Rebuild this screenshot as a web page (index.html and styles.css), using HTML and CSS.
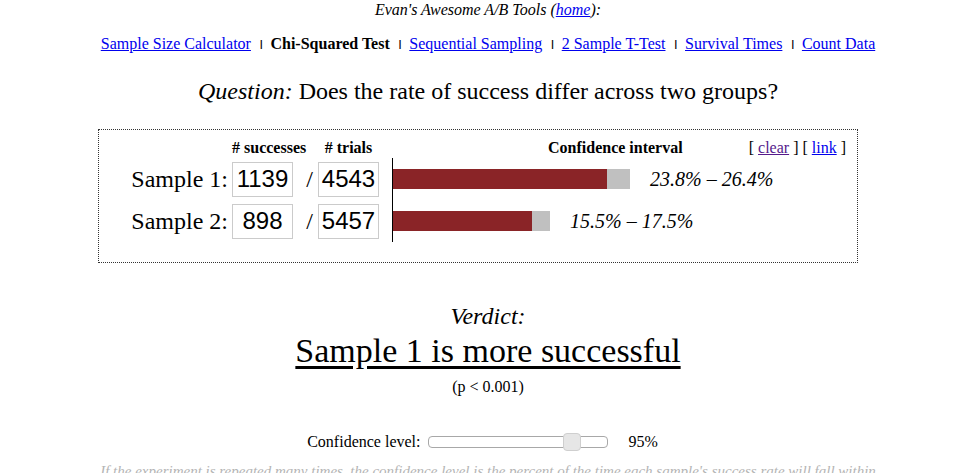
FILE: index.html
```html
<!DOCTYPE html>
<html lang="en">
<head>
<meta charset="utf-8">
<title>Chi-Squared Test</title>
<link rel="stylesheet" href="styles.css">
</head>
<body>
<div class="top">Evan's Awesome A/B Tools (<a href="#">home</a>):</div>
<nav class="nav"><a href="#">Sample Size Calculator</a><span class="sep">|</span><b>Chi-Squared Test</b><span class="sep">|</span><a href="#">Sequential Sampling</a><span class="sep">|</span><a href="#">2 Sample T-Test</a><span class="sep">|</span><a href="#">Survival Times</a><span class="sep">|</span><a href="#">Count Data</a></nav>
<h1 class="question"><i>Question:</i> Does the rate of success differ across two groups?</h1>
<div class="box">
  <div class="grid">
    <div class="hd hd-succ"># successes</div>
    <div class="hd hd-trials"># trials</div>
    <div class="hd hd-ci"><span class="ci-title">Confidence interval</span><span class="links">[ <a href="#" class="visited">clear</a> ] [ <a href="#">link</a> ]</span></div>

    <div class="label">Sample 1:</div>
    <input class="num" type="text" value="1139">
    <div class="slash">/</div>
    <input class="num" type="text" value="4543">
    <div class="spacer"></div>
    <div class="bar-cell"><span class="bar" style="width:214px"></span><span class="bar-ci" style="width:23px"></span><span class="ci">23.8% – 26.4%</span></div>

    <div class="label">Sample 2:</div>
    <input class="num" type="text" value="898">
    <div class="slash">/</div>
    <input class="num" type="text" value="5457">
    <div class="spacer"></div>
    <div class="bar-cell"><span class="bar" style="width:139px"></span><span class="bar-ci" style="width:18px"></span><span class="ci">15.5% – 17.5%</span></div>
  </div>
</div>
<div class="verdict">
  <div class="v-label">Verdict:</div>
  <div class="v-result">Sample 1 is more successful</div>
  <div class="v-p">(p &lt; 0.001)</div>
</div>
<div class="conf"><span class="conf-label">Confidence level:</span><input class="slider" type="range" min="75" max="99" value="95"><span class="pct">95%</span></div>
<p class="note">If the experiment is repeated many times, the confidence level is the percent of the time each sample's success rate will fall within the true confidence interval.</p>
</body>
</html>
```
FILE: styles.css
```css
* { box-sizing: border-box; }
html, body { margin: 0; padding: 0; background: #fff; }
body {
  font-family: "Liberation Serif", "Times New Roman", serif;
  font-size: 16px;
  color: #000;
  padding-left: 4px;
  overflow: hidden;
}
a { color: #0000ee; text-decoration: underline; }
a.visited { color: #551a8b; }

.top { text-align: center; font-style: italic; line-height: 20px; }
.nav { text-align: center; line-height: 20px; margin-top: 14px; white-space: nowrap; }
.nav b { font-weight: bold; }
.sep {
  font: bold 9px "Liberation Sans", Arial, sans-serif;
  vertical-align: 2px;
  margin: 0 8px 0 9px;
}
.question {
  font-family: "Liberation Serif", "Times New Roman", serif;
  font-size: 24px;
  font-weight: normal;
  line-height: 30px;
  margin: 22px 0 0;
  text-align: center;
}

.box {
  width: 760px;
  margin: 23px 0 0 94px;
  border: 1px dotted #333;
  padding-bottom: 20px;
}
.grid {
  display: grid;
  grid-template-columns: 133px 61px 25px 61px 13px 1fr;
  grid-template-rows: 28px 42px 42px;
  align-items: center;
}
.hd {
  align-self: end;
  line-height: 20px;
  font-weight: bold;
  white-space: nowrap;
}
.hd-succ { grid-column: 2; }
.hd-trials { grid-column: 4; text-align: center; }
.hd-ci { grid-column: 6; display: flex; padding-left: 156px; padding-right: 11px; }
.links { margin-left: auto; font-weight: normal; }

.label {
  grid-column: 1;
  text-align: right;
  padding-right: 4px;
  font-size: 24px;
  line-height: 30px;
  white-space: nowrap;
}
.num {
  width: 61px;
  height: 35px;
  margin: 0;
  border: 1px solid #cbcbcb;
  border-radius: 0;
  padding: 0 1px;
  font: 24px "Liberation Sans", Arial, sans-serif;
  color: #000;
  background: #fff;
  text-align: center;
  outline: none;
}
.slash {
  text-align: right;
  padding-right: 5px;
  font-size: 24px;
  line-height: 30px;
}
.bar-cell {
  align-self: stretch;
  border-left: 1px solid #000;
  display: flex;
  align-items: center;
}
.bar { height: 20px; background: #8a2427; display: block; }
.bar-ci { height: 20px; background: #c0c0c0; display: block; }
.ci { font-style: italic; font-size: 20px; margin-left: 20px; white-space: nowrap; }

.verdict { text-align: center; margin-top: 38px; }
.v-label { font-style: italic; font-size: 24px; line-height: 30px; }
.v-result {
  font-size: 34px;
  line-height: 40px;
  text-decoration: underline;
  text-decoration-thickness: 2.5px;
  text-underline-offset: 4px;
}
.v-p { line-height: 20px; margin-top: 6px; }

.conf {
  display: flex;
  justify-content: center;
  align-items: center;
  height: 22px;
  margin-top: 34px;
  padding-right: 11px;
}
.slider {
  -webkit-appearance: none;
  appearance: none;
  width: 180px;
  height: 18px;
  margin: 0 20px 0 8px;
  padding: 0;
  background: transparent;
}
.slider::-webkit-slider-runnable-track {
  height: 12px;
  background: #fff;
  border: 1px solid #a8a8a8;
  border-radius: 4px;
}
.slider::-webkit-slider-thumb {
  -webkit-appearance: none;
  appearance: none;
  width: 18px;
  height: 18px;
  margin-top: -4px;
  background: #e6e6e6;
  border: 1px solid #cfcfcf;
  border-radius: 4px;
}
.note {
  width: 790px;
  margin: 9px auto 0;
  font-style: italic;
  font-size: 15px;
  line-height: 18px;
  color: #b4b4b4;
  text-align: center;
}
```
